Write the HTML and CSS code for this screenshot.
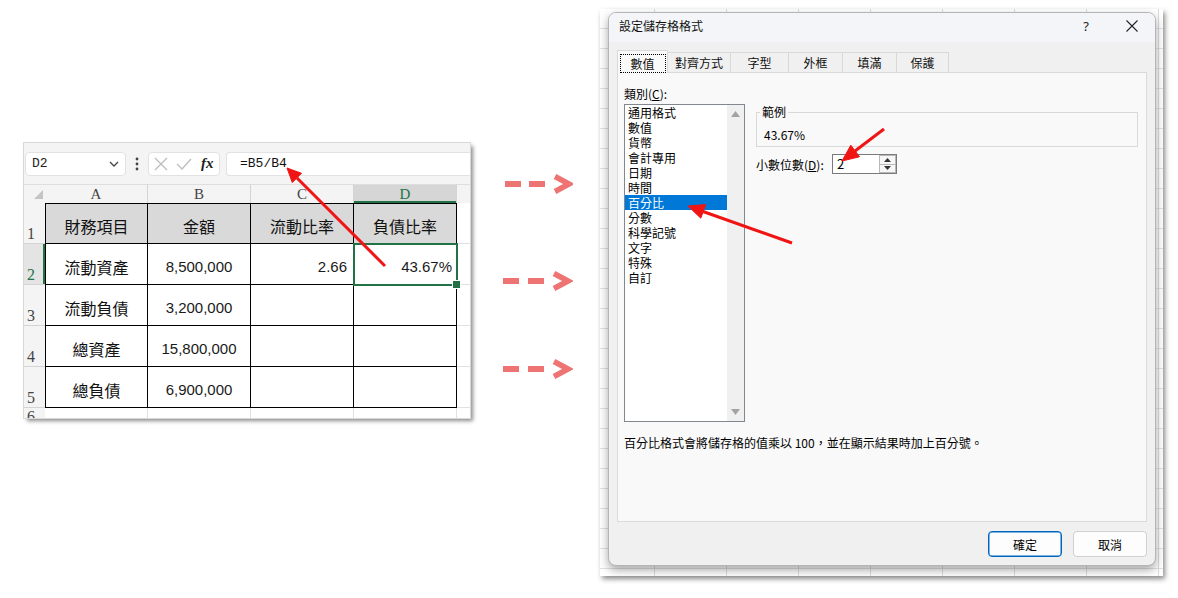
FILE: index.html
```html
<!DOCTYPE html>
<html lang="zh-Hant">
<head>
<meta charset="utf-8">
<title>設定儲存格格式</title>
<link rel="stylesheet" href="styles.css">
</head>
<body>
<div class="page">
  <div class="excel">
    <div class="fbar">
      <div class="namebox"><span>D2</span>
        <svg class="chev" width="10" height="6" viewBox="0 0 10 6"><path d="M1 1 L5 5 L9 1" fill="none" stroke="#444" stroke-width="1.3"/></svg>
      </div>
      <div class="fdots"><svg width="4" height="14" viewBox="0 0 4 14"><circle cx="2" cy="2" r="1.4" fill="#444"/><circle cx="2" cy="7" r="1.4" fill="#444"/><circle cx="2" cy="12" r="1.4" fill="#444"/></svg></div>
      <div class="fxbox">
        <svg class="fx-x" width="14" height="14" viewBox="0 0 14 14"><path d="M1 1 L13 13 M13 1 L1 13" stroke="#bdbdbd" stroke-width="1.3"/></svg>
        <svg class="fx-ok" width="16" height="14" viewBox="0 0 16 14"><path d="M1 7 L6 12 L15 2" fill="none" stroke="#bdbdbd" stroke-width="1.3"/></svg>
        <span class="fx">fx</span>
      </div>
      <div class="formula">=B5/B4</div>
    </div>
    <div class="sheet">
      <div class="corner"><span class="tri"></span></div>
      <div class="ch">A</div><div class="ch">B</div><div class="ch">C</div><div class="ch ch-on">D</div><div class="ch ch-x"></div>

      <div class="rh">1</div>
      <div class="c r1 ca hd">財務項目</div><div class="c r1 hd">金額</div><div class="c r1 hd">流動比率</div><div class="c r1 hd">負債比率</div><div class="gx"></div>

      <div class="rh rh-on">2</div>
      <div class="c ca">流動資產</div><div class="c n">8,500,000</div><div class="c n num">2.66</div><div class="c n num sel">43.67%</div><div class="gx"></div>

      <div class="rh">3</div>
      <div class="c ca">流動負債</div><div class="c n">3,200,000</div><div class="c"></div><div class="c"></div><div class="gx"></div>

      <div class="rh">4</div>
      <div class="c ca">總資產</div><div class="c n">15,800,000</div><div class="c"></div><div class="c"></div><div class="gx"></div>

      <div class="rh">5</div>
      <div class="c ca">總負債</div><div class="c n">6,900,000</div><div class="c"></div><div class="c"></div><div class="gx"></div>

      <div class="rh rh6">6</div>
      <div class="g6"></div><div class="g6"></div><div class="g6"></div><div class="g6"></div><div class="g6 g6x"></div>
    </div>
  </div>

  <div class="arrows">
    <svg class="pa pa1" width="70" height="20" viewBox="0 0 70 20"><rect x="2" y="7" width="16" height="6" fill="#ee7373"/><rect x="26" y="7" width="16" height="6" fill="#ee7373"/><polyline points="52,2.5 66,10 52,17.5" fill="none" stroke="#ee7373" stroke-width="5.5"/></svg>
    <svg class="pa pa2" width="70" height="20" viewBox="0 0 70 20"><rect x="0" y="7" width="16" height="6" fill="#ee7373"/><rect x="25" y="7" width="16" height="6" fill="#ee7373"/><polyline points="51,2.5 65,10 51,17.5" fill="none" stroke="#ee7373" stroke-width="5.5"/></svg>
    <svg class="pa pa3" width="70" height="20" viewBox="0 0 70 20"><rect x="0" y="7" width="16" height="6" fill="#ee7373"/><rect x="25" y="7" width="16" height="6" fill="#ee7373"/><polyline points="51,2.5 65,10 51,17.5" fill="none" stroke="#ee7373" stroke-width="5.5"/></svg>
  </div>

  <div class="backdrop">
    <div class="dialog">
      <div class="dlg-title">
        <span class="dlg-name">設定儲存格格式</span>
        <span class="tbtn help">?</span>
        <span class="tbtn close"><svg width="12" height="12" viewBox="0 0 12 12"><path d="M0.5 0.5 L11.5 11.5 M11.5 0.5 L0.5 11.5" stroke="#222" stroke-width="1.1"/></svg></span>
      </div>
      <div class="tabs">
        <div class="tab on w1"><span class="focus">數值</span></div>
        <div class="tab w2">對齊方式</div>
        <div class="tab w3">字型</div>
        <div class="tab w4">外框</div>
        <div class="tab w5">填滿</div>
        <div class="tab w6">保護</div>
      </div>
      <div class="panel">
        <div class="cols">
          <div class="cat-col">
            <div class="lbl">類別(<u>C</u>):</div>
            <div class="listbox">
              <div class="items">
                <div class="it">通用格式</div>
                <div class="it">數值</div>
                <div class="it">貨幣</div>
                <div class="it">會計專用</div>
                <div class="it">日期</div>
                <div class="it">時間</div>
                <div class="it it-on">百分比</div>
                <div class="it">分數</div>
                <div class="it">科學記號</div>
                <div class="it">文字</div>
                <div class="it">特殊</div>
                <div class="it">自訂</div>
              </div>
              <div class="vscroll">
                <svg width="9" height="6" viewBox="0 0 9 6"><path d="M4.5 0 L9 6 L0 6 Z" fill="#a3a3a3"/></svg>
                <svg width="9" height="6" viewBox="0 0 9 6"><path d="M0 0 L9 0 L4.5 6 Z" fill="#a3a3a3"/></svg>
              </div>
            </div>
          </div>
          <div class="opt-col">
            <fieldset class="sample">
              <legend>範例</legend>
              <div class="sample-val">43.67%</div>
            </fieldset>
            <div class="dec-row">
              <span class="dec-lbl">小數位數(<u>D</u>):</span>
              <div class="spin">
                <span class="spin-val">2</span>
                <div class="spin-btns">
                  <span class="sb"><svg width="7" height="4" viewBox="0 0 7 4"><path d="M3.5 0 L7 4 L0 4 Z" fill="#333"/></svg></span>
                  <span class="sb"><svg width="7" height="4" viewBox="0 0 7 4"><path d="M0 0 L7 0 L3.5 4 Z" fill="#333"/></svg></span>
                </div>
              </div>
            </div>
          </div>
        </div>
        <div class="desc">百分比格式會將儲存格的值乘以 100，並在顯示結果時加上百分號。</div>
      </div>
      <div class="buttons">
        <div class="btn ok">確定</div>
        <div class="btn cancel">取消</div>
      </div>
    </div>
  </div>
</div>

<svg class="annot" width="1178" height="598" viewBox="0 0 1178 598">
  <g fill="#f01414" stroke="#f01414">
    <line x1="385" y1="266" x2="297" y2="178" stroke-width="3"/>
    <polygon points="287,168 301.5,173.3 292.3,182.5" stroke-width="1"/>
    <line x1="792" y1="243" x2="703" y2="211.5" stroke-width="3"/>
    <polygon points="688,206 705.6,204.6 700.8,218.2" stroke-width="1"/>
    <line x1="884" y1="129" x2="855" y2="151" stroke-width="3"/>
    <polygon points="842,161 859.5,156.8 850.8,145.2" stroke-width="1"/>
  </g>
</svg>
</body>
</html>
```

FILE: styles.css
```css
* { box-sizing: border-box; margin: 0; padding: 0; }
html, body { width: 1178px; height: 598px; overflow: hidden; background: #fff; }
body {
  position: relative;
  font-family: "Noto Sans CJK TC", "Noto Sans", sans-serif;
  color: #000;
}
.page { display: flex; align-items: flex-start; height: 598px; }

/* ---------- Excel panel ---------- */
.excel {
  margin: 143px 0 0 24px;
  width: 446px;
  height: 275px;
  background: #f4f4f4;
  box-shadow: 0 0 0 1px #d8d8d8, 3px 3px 4px rgba(0,0,0,.45);
  overflow: hidden;
}
.fbar { height: 41px; display: flex; align-items: center; padding-left: 1px; }
.namebox {
  width: 101px; height: 24px;
  background: #fff; border: 1px solid #e2e2e2; border-radius: 4px;
  display: flex; align-items: center; justify-content: space-between;
  padding: 0 6px 0 6px;
  font: 13px "Liberation Mono", monospace; color: #222;
}
.fdots { width: 22px; display: flex; justify-content: center; }
.fxbox {
  width: 72px; height: 24px;
  background: #fff; border: 1px solid #e2e2e2; border-radius: 4px;
  display: flex; align-items: center; padding-left: 5px; gap: 8px;
}
.fx { font: italic bold 15px "Liberation Serif", serif; color: #222; margin-left: 1px; }
.formula {
  flex: 1; height: 24px; margin-left: 6px;
  background: #fff; border: 1px solid #e2e2e2; border-right: none; border-radius: 4px 0 0 4px;
  font: 13px "Liberation Mono", monospace; color: #111;
  padding-left: 13px; line-height: 22px;
}

.sheet {
  display: grid;
  grid-template-columns: 21px repeat(4, 103px) 1fr;
  grid-template-rows: 19px repeat(5, 41px) 1fr;
  background: #fff;
}
.corner { background: #f4f4f4; position: relative; border-top: 1px solid #dedede; }
.tri {
  position: absolute; right: 2px; bottom: 4px;
  width: 0; height: 0;
  border-left: 9px solid transparent; border-bottom: 9px solid #c4c4c4;
}
.ch {
  background: #f4f4f4; border-right: 1px solid #d4d4d4; border-top: 1px solid #dedede;
  font: 15px "Liberation Serif", serif; color: #444;
  display: flex; align-items: flex-end; justify-content: center; line-height: 17px;
}
.ch-on { background: #d6d6d6; color: #217346; box-shadow: inset 0 -2px 0 #217346; }
.ch-x { border-right: none; }
.rh {
  background: #f4f4f4; border-bottom: 1px solid #d4d4d4;
  font: 16px "Liberation Serif", serif; color: #444;
  display: flex; align-items: flex-end; padding-left: 3px; line-height: 18px;
}
.rh-on { background: #e4e4e4; color: #217346; box-shadow: inset -2px 0 0 #217346; }
.rh6 { border-bottom: none; }
.c {
  border-right: 1px solid #000; border-bottom: 1px solid #000;
  font-size: 16px; color: #111;
  display: flex; align-items: center; justify-content: center;
  padding-top: 5px;
}
.c.n { font-family: "Liberation Sans", "Noto Sans CJK TC", sans-serif; font-size: 15px; color: #1a1a1a; }
.r1 { border-top: 1px solid #000; }
.ca { border-left: 1px solid #000; }
.hd { background: #d9d9d9; }
.num { justify-content: flex-end; padding-right: 6px; }
.sel { position: relative; padding-right: 4px; }
.sel::after {
  content: ""; position: absolute; left: -1px; top: -1px; right: -2px; bottom: -2px;
  border: 2px solid #217346;
}
.sel::before {
  content: ""; position: absolute; right: -5px; bottom: -5px;
  width: 7px; height: 7px; background: #217346; border: 1px solid #fff; z-index: 1;
}
.gx { border-bottom: 1px solid #e1e1e1; }
.g6 { border-right: 1px solid #e1e1e1; }
.g6x { border-right: none; }

/* ---------- dashed pink arrows ---------- */
.arrows { display: flex; flex-direction: column; margin-left: 33px; }
.pa { display: block; }
.pa1 { margin-top: 174px; }
.pa2 { margin-top: 77px; }
.pa3 { margin-top: 68px; }

/* ---------- dialog ---------- */
.backdrop {
  margin: 9px 0 0 27px;
  width: 563px; height: 567px;
  background-color: #fff;
  background-image:
    repeating-linear-gradient(to right, transparent 0 54px, #dcdcdc 54px 55px, transparent 55px 72px),
    repeating-linear-gradient(to bottom, transparent 0 19px, #e2e2e2 19px 20px);
  box-shadow: 2px 3px 5px rgba(0,0,0,.45);
  padding: 3px 7px 0 8px;
}
.dialog {
  width: 548px; height: 554px;
  background: #f0f0f0;
  border: 1px solid #b5b5b5;
  border-radius: 8px;
  box-shadow: 0 4px 10px rgba(0,0,0,.35);
  font-size: 12px;
  overflow: hidden;
}
.dlg-title {
  height: 29px; display: flex; align-items: center;
  padding: 0 0 4px 10px;
  background: #f3f5f8;
}
.dlg-name { flex: 1; font-size: 12px; color: #111; }
.tbtn { width: 46px; display: flex; justify-content: center; align-items: center; }
.help { font: 13px "Noto Sans", sans-serif; color: #222; }
.tabs {
  display: flex; align-items: flex-start;
  height: 22px; margin-top: 8px; padding-left: 8px;
}
.tab {
  height: 20px; margin-top: 2px;
  border: 1px solid #d9d9d9; border-bottom: none; margin-left: -1px;
  background: #f0f0f0;
  display: flex; align-items: center; justify-content: center;
  font-size: 12px; color: #111;
}
.tab:first-child { margin-left: 0; }
.tab.on {
  height: 23px; margin-top: 0;
  background: #f9f9f9; position: relative; z-index: 2;
  align-items: flex-start; padding-top: 3px;
}
.focus {
  width: 46px; height: 19px; border: 1px dotted #000;
  display: flex; align-items: center; justify-content: center;
}
.w1 { width: 51px; } .w2 { width: 64px; } .w3 { width: 59px; }
.w4 { width: 55px; } .w5 { width: 55px; } .w6 { width: 53px; }

.panel {
  height: 450px; margin: 0 8px 0 8px;
  background: #f9f9f9; border: 1px solid #dadada;
  padding: 13px 8px 0 6px;
}
.cols { display: flex; align-items: flex-start; }
.cat-col { width: 121px; }
.lbl { line-height: 16px; }
.listbox {
  margin-top: 2px; height: 318px;
  border: 1px solid #828790; background: #fff;
  display: flex;
}
.items { flex: 1; }
.it { line-height: 15px; padding-left: 3px; white-space: nowrap; }
.it-on { background: #0078d7; color: #fff; }
.vscroll {
  width: 17px; background: #f0f0f0;
  display: flex; flex-direction: column; justify-content: space-between; align-items: center;
  padding: 6px 0 6px;
}
.opt-col { flex: 1; margin-left: 11px; margin-top: 18px; }
.sample {
  border: 1px solid #d9d9d9;
  padding: 0 7px 3px 7px;
}
.sample legend { margin-left: -4px; padding: 0 2px; line-height: 16px; }
.sample-val { line-height: 16px; margin-top: 7px; }
.dec-row { display: flex; align-items: center; margin-top: 7px; height: 20px; }
.dec-lbl { width: 76px; white-space: nowrap; }
.spin {
  width: 65px; height: 20px;
  border: 1px solid #7a7a7a; background: #fff;
  display: flex; align-items: stretch;
}
.spin-val { flex: 1; padding-left: 4px; line-height: 18px; font-size: 13px; }
.spin-btns { width: 17px; display: flex; flex-direction: column; }
.sb {
  flex: 1; display: flex; align-items: center; justify-content: center;
  border: 1px solid #b9b9b9; background: #f7f7f7;
}
.sb + .sb { border-top: none; }
.desc { margin-top: 13px; line-height: 16px; }

.buttons {
  display: flex; justify-content: flex-end; gap: 11px;
  margin-top: 9px; padding-right: 8px;
}
.btn {
  width: 74px; height: 26px; border-radius: 4px;
  display: flex; align-items: center; justify-content: center;
  background: #fdfdfd; font-size: 12px;
}
.ok { border: 1px solid #0067c0; box-shadow: inset 0 0 0 0.5px #0067c0; }
.cancel { border: 1px solid #d0d0d0; }

.annot { position: absolute; left: 0; top: 0; pointer-events: none; z-index: 10; }
```
